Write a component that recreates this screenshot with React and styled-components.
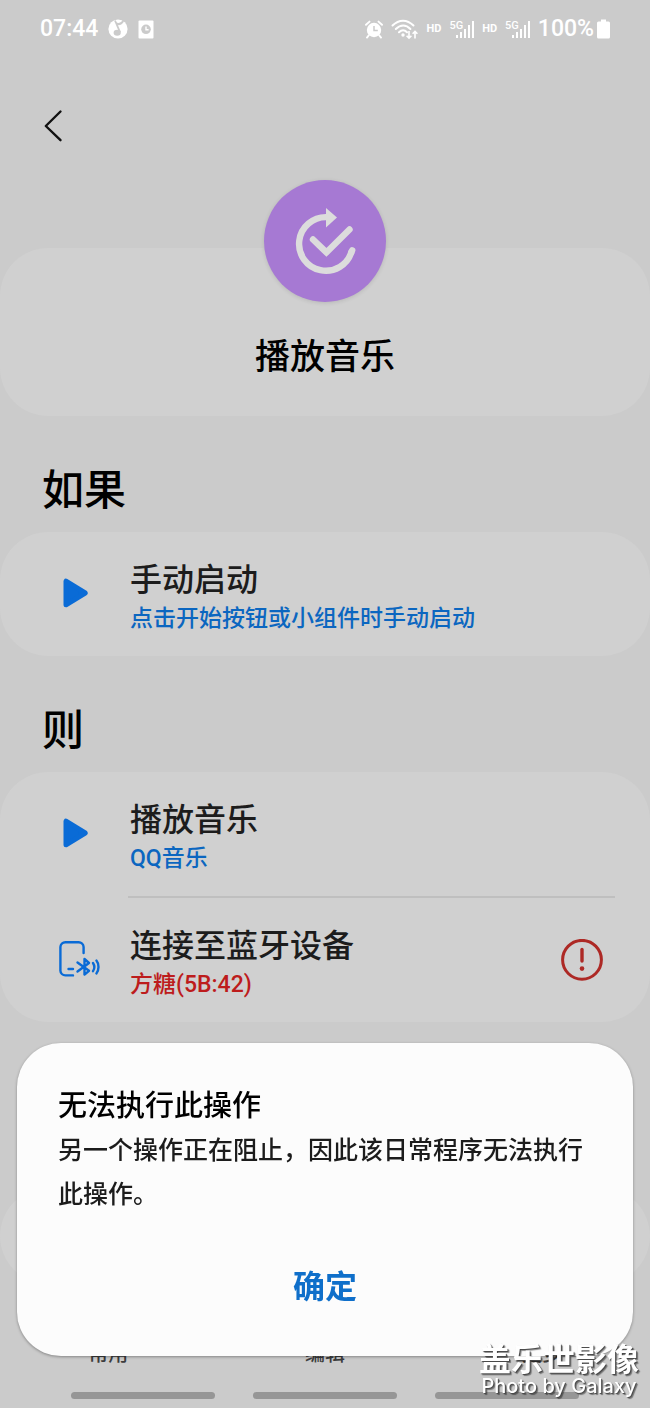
import React, { useState } from 'react'
import styled, { createGlobalStyle } from 'styled-components'


const GlobalStyle = createGlobalStyle`
    * {
        box-sizing: border-box;
    }

    body {
        margin: 0;
        background-color: #cbcbcb;
        font-family: Roboto, "Noto Sans CJK SC", sans-serif;
        font-weight: 500;
        color: #1c1c1c;
    }
`

const Screen = styled.div`
    display: flex;
    flex-direction: column;
    min-height: 100vh;
`

const StatusBar = styled.div`
    display: flex;
    justify-content: space-between;
    align-items: center;
    height: 58px;
    padding: 0px 40px;
    color: #fff;
`

const StatusGroup = styled.div`
    display: flex;
    align-items: center;
    gap: ${props => props.gap};
`

const StatusText = styled.span`
    font-size: 23px;
    line-height: 28px;
`

const SmallText = styled.span`
    font-size: 11px;
    line-height: 16px;
    font-weight: 700;
`

const Signal = styled.div`
    display: flex;
    align-items: flex-end;
`

const NetworkText = styled.span`
    font-size: 11px;
    line-height: 12px;
    align-self: flex-start;
    margin-right: -8px;
`

const Header = styled.header`
    height: 122px;
    padding: 48px 40px 0px;
`

const BackButton = styled.button`
    display: flex;
    padding: 0px;
    border: none;
    background: none;
    color: #111;
`

const Card = styled.section`
    background-color: #d0d0d0;
    border-radius: 48px;
`

const HeroCard = styled(Card)`
    display: flex;
    flex-direction: column;
    align-items: center;
    margin-top: 68px;
    padding-bottom: 32px;
`

const RoutineBadge = styled.div`
    width: 122px;
    height: 122px;
    margin-top: -68px;
    border-radius: 50%;
    background-color: #a679d3;
    box-shadow: 0 1px 4px rgba(0, 0, 0, 0.12);
`

const RoutineName = styled.h1`
    margin: 30px 0px 0px;
    font-size: 35px;
    line-height: 52px;
    font-weight: 500;
    color: #000;
`

const SectionTitle = styled.h2`
    margin: 0px;
    padding: 46px 42px 12px;
    font-size: 42px;
    line-height: 58px;
    font-weight: 500;
    color: #000;
`

const Row = styled.div`
    display: flex;
    align-items: center;
    height: 124px;
    padding: 0px 46px 0px 52px;
`

const RowIcon = styled.div`
    display: flex;
    justify-content: center;
    width: 48px;
    margin-right: 30px;
    padding-bottom: 2px;
`

const RowText = styled.div`
    flex: 1;
    padding-top: 10px;
`

const RowTitle = styled.h3`
    margin: 0px;
    font-size: 32px;
    line-height: 40px;
    font-weight: 500;
`

const RowDetail = styled.p`
    margin: 0px;
    font-size: 23px;
    line-height: 38px;
    color: ${props => props.$error ? "#bd1c1c" : "#0b66c0"};
`

const Divider = styled.hr`
    height: 2px;
    margin: 0px 35px 0px 128px;
    border: none;
    background-color: #bfbfbf;
`

const StartCard = styled(Card)`
    height: 96px;
    margin-top: 166px;
`

const Bottom = styled.footer`
    margin-top: auto;
`

const Tabs = styled.nav`
    display: grid;
    grid-template-columns: repeat(3, 1fr);
`

const Tab = styled.button`
    padding: 0px;
    border: none;
    background: none;
    font: inherit;
    font-size: 20px;
    line-height: 28px;
    color: #3c3c3c;
`

const GestureBar = styled.div`
    display: flex;
    justify-content: center;
    gap: 38px;
    padding: 24px 0px 9px;
`

const GestureHint = styled.span`
    width: 144px;
    height: 7px;
    border-radius: 4px;
    background-color: #969696;
`

const Dialog = styled.div`
    position: fixed;
    left: 17px;
    right: 17px;
    bottom: 52px;
    padding: 43px 41px 40px;
    border-radius: 44px;
    background-color: #fcfcfc;
    box-shadow: 0 1px 3px rgba(0, 0, 0, 0.35);
`

const DialogTitle = styled.h2`
    margin: 0px;
    font-size: 29px;
    line-height: 40px;
    font-weight: 500;
    color: #000;
`

const DialogText = styled.p`
    margin: 3px 0px 42px;
    font-size: 25px;
    line-height: 44px;
`

const ConfirmButton = styled.button`
    display: block;
    width: 100%;
    padding: 0px;
    border: none;
    background: none;
    font: inherit;
    font-size: 32px;
    line-height: 57px;
    font-weight: 700;
    color: #0f6fca;
`

const Watermark = styled.div`
    position: fixed;
    right: 11px;
    bottom: 12px;
    color: #fff;
    text-align: center;
    text-shadow: 1px 1px 1px #444, 2px 2px 1px rgba(0, 0, 0, 0.4);
`

const WatermarkTitle = styled.div`
    font-size: 32px;
    line-height: 32px;
    font-weight: 700;
`

const WatermarkText = styled.div`
    font-family: Inter, sans-serif;
    font-size: 20px;
    line-height: 20px;
    font-weight: 500;
`


const MusicIcon = () => (
    <svg width="20" height="20" viewBox="0 0 20 20">
        <circle cx="10" cy="10" r="9.6" fill="#fff" />
        <path d="M7 1.5L12 13.2" fill="none" stroke="#cbcbcb" strokeWidth="1.8" />
        <path d="M7 2.5C9.5 4.8 12.5 4.2 14.5 1.2L16 2.4C14.6 5.2 12 6.6 9.2 6z" fill="#cbcbcb" />
        <ellipse cx="9.2" cy="13.8" rx="3.6" ry="3" fill="#cbcbcb" />
    </svg>
)

const ClockPageIcon = () => (
    <svg width="16" height="19" viewBox="0 0 16 19">
        <rect x="0.5" y="0.5" width="15" height="18" rx="1" fill="#fff" />
        <circle cx="8" cy="9.3" r="4.8" fill="#cbcbcb" />
        <path d="M8 6.5v3.2h2.6" fill="none" stroke="#fff" strokeWidth="1.4" />
    </svg>
)

const AlarmIcon = () => (
    <svg width="18" height="19" viewBox="0 0 18 19">
        <circle cx="9" cy="10" r="7.2" fill="#fff" />
        <path d="M1 4.8L4.5 1.6M17 4.8L13.5 1.6M3.8 15.2L2 17.6M14.2 15.2L16 17.6" stroke="#fff" strokeWidth="1.9" strokeLinecap="round" />
        <path d="M9 6v4.4h3.8" fill="none" stroke="#cbcbcb" strokeWidth="1.5" />
    </svg>
)

const WifiIcon = () => (
    <svg width="28" height="21" viewBox="0 0 28 21">
        <g fill="none" stroke="#fff" strokeWidth="2" strokeLinecap="round">
            <path d="M1.5 6.5C8 0 16 0 22.5 6.5" />
            <path d="M4.8 10C9.5 5.2 15 5.2 19.4 10" />
            <path d="M8 13.2C10.8 10.6 13.4 10.6 16 13.2" />
        </g>
        <circle cx="12" cy="16" r="1.7" fill="#fff" />
        <path d="M18 12v7M15.6 16.8L18 19.2L20.4 16.8M24 19.5v-7M21.6 14.8L24 12.4L26.4 14.8" fill="none" stroke="#fff" strokeWidth="1.6" />
    </svg>
)

const BarsIcon = () => (
    <svg width="19" height="18" viewBox="0 0 19 18">
        <path d="M2 18v-3M6 18v-6M10 18v-9M14 18v-13M18 18V1" stroke="#fff" strokeWidth="2" />
    </svg>
)

const BatteryIcon = () => (
    <svg width="13" height="20" viewBox="0 0 13 20">
        <path d="M4 0.5h5v2h2.5a1.5 1.5 0 0 1 1.5 1.5v14a1.5 1.5 0 0 1-1.5 1.5h-10A1.5 1.5 0 0 1 0 18V4a1.5 1.5 0 0 1 1.5-1.5H4z" fill="#fff" />
    </svg>
)

const BackIcon = () => (
    <svg width="26" height="40" viewBox="0 0 26 40">
        <path d="M20.5 5.5L5.8 20L20.5 34.2" fill="none" stroke="currentColor" strokeWidth="2.4" strokeLinecap="round" strokeLinejoin="round" />
    </svg>
)

const RoutineIcon = () => (
    <svg width="122" height="122" viewBox="0 0 122 122">
        <g fill="none" stroke="#dcdcdc" strokeWidth="6.4">
            <path d="M63 37.2A26.8 26.8 0 1 0 87.6 71.5" />
            <path d="M87.4 72L88.2 70.4" strokeLinecap="round" />
            <path d="M49 59.5L62.4 72.4L85.5 49.5" strokeLinecap="round" />
        </g>
        <path d="M62 28L73 37.6L62 47.5z" fill="#dcdcdc" />
    </svg>
)

const PlayIcon = () => (
    <svg width="26" height="30" viewBox="0 0 26 30">
        <path d="M3 3.2v23.6L22.2 15z" fill="#0a6bd6" stroke="#0a6bd6" strokeWidth="5" strokeLinejoin="round" />
    </svg>
)

const BluetoothDeviceIcon = () => (
    <svg width="48" height="40" viewBox="0 0 48 40">
        <g fill="none" stroke="#0a6bd6" strokeWidth="2.4" strokeLinecap="round" strokeLinejoin="round">
            <path d="M31.6 14V8A5 5 0 0 0 26.6 3.2H13.4A5 5 0 0 0 8.4 8V31.6A5 5 0 0 0 13.4 36.4H21" />
            <path d="M16.5 30H21" />
            <path d="M25.5 23.5L37 31.8L32.5 35.6V20L37 24L25.5 32.5" />
            <path d="M41 24C42.6 26.4 42.6 29.8 41 32.2" />
            <path d="M44.4 21.6C47.2 25 47.2 31 44.4 34.4" />
        </g>
    </svg>
)

const WarningIcon = () => (
    <svg width="43" height="43" viewBox="0 0 43 43">
        <circle cx="21" cy="20.8" r="19.4" fill="none" stroke="#ad2925" strokeWidth="3" />
        <path d="M21 10.4v11.6" stroke="#ad2925" strokeWidth="3.4" strokeLinecap="round" />
        <circle cx="21" cy="29.6" r="2.3" fill="#ad2925" />
    </svg>
)


const Action = ({ icon, title, detail, error }) => (
    <Row>
        <RowIcon>{icon}</RowIcon>
        <RowText>
            <RowTitle>{title}</RowTitle>
            <RowDetail $error={error}>{detail}</RowDetail>
        </RowText>
        {error && <WarningIcon />}
    </Row>
)

const MobileSignal = () => (
    <Signal>
        <NetworkText>5G</NetworkText>
        <BarsIcon />
    </Signal>
)

const App = () => {
    const tabs = ["常用", "编辑", "更多"]

    const [isDialogOpen, setIsDialogOpen] = useState(true)

  return (
    <>
        <GlobalStyle />
        <Screen>
            <StatusBar>
                <StatusGroup gap="10px">
                    <StatusText>07:44</StatusText>
                    <MusicIcon />
                    <ClockPageIcon />
                </StatusGroup>
                <StatusGroup gap="8px">
                    <AlarmIcon />
                    <WifiIcon />
                    <SmallText>HD</SmallText>
                    <MobileSignal />
                    <SmallText>HD</SmallText>
                    <MobileSignal />
                    <StatusGroup gap="3px">
                        <StatusText>100%</StatusText>
                        <BatteryIcon />
                    </StatusGroup>
                </StatusGroup>
            </StatusBar>
            <Header>
                <BackButton aria-label="返回">
                    <BackIcon />
                </BackButton>
            </Header>
            <main>
                <HeroCard>
                    <RoutineBadge>
                        <RoutineIcon />
                    </RoutineBadge>
                    <RoutineName>播放音乐</RoutineName>
                </HeroCard>
                <SectionTitle>如果</SectionTitle>
                <Card>
                    <Action icon={<PlayIcon />} title="手动启动" detail="点击开始按钮或小组件时手动启动" />
                </Card>
                <SectionTitle>则</SectionTitle>
                <Card>
                    <Action icon={<PlayIcon />} title="播放音乐" detail="QQ音乐" />
                    <Divider />
                    <Action icon={<BluetoothDeviceIcon />} title="连接至蓝牙设备" detail="方糖(5B:42)" error />
                </Card>
                <StartCard />
            </main>
            <Bottom>
                <Tabs>
                    {tabs.map(tab => (
                        <Tab key={tab}>{tab}</Tab>
                    ))}
                </Tabs>
                <GestureBar>
                    <GestureHint />
                    <GestureHint />
                    <GestureHint />
                </GestureBar>
            </Bottom>
        </Screen>
        {isDialogOpen && (
            <Dialog role="dialog" aria-labelledby="dialog-title">
                <DialogTitle id="dialog-title">无法执行此操作</DialogTitle>
                <DialogText>另一个操作正在阻止，因此该日常程序无法执行此操作。</DialogText>
                <ConfirmButton onClick={() => setIsDialogOpen(false)}>确定</ConfirmButton>
            </Dialog>
        )}
        <Watermark>
            <WatermarkTitle>盖乐世影像</WatermarkTitle>
            <WatermarkText>Photo by Galaxy</WatermarkText>
        </Watermark>
    </>
  )
}

export default App
